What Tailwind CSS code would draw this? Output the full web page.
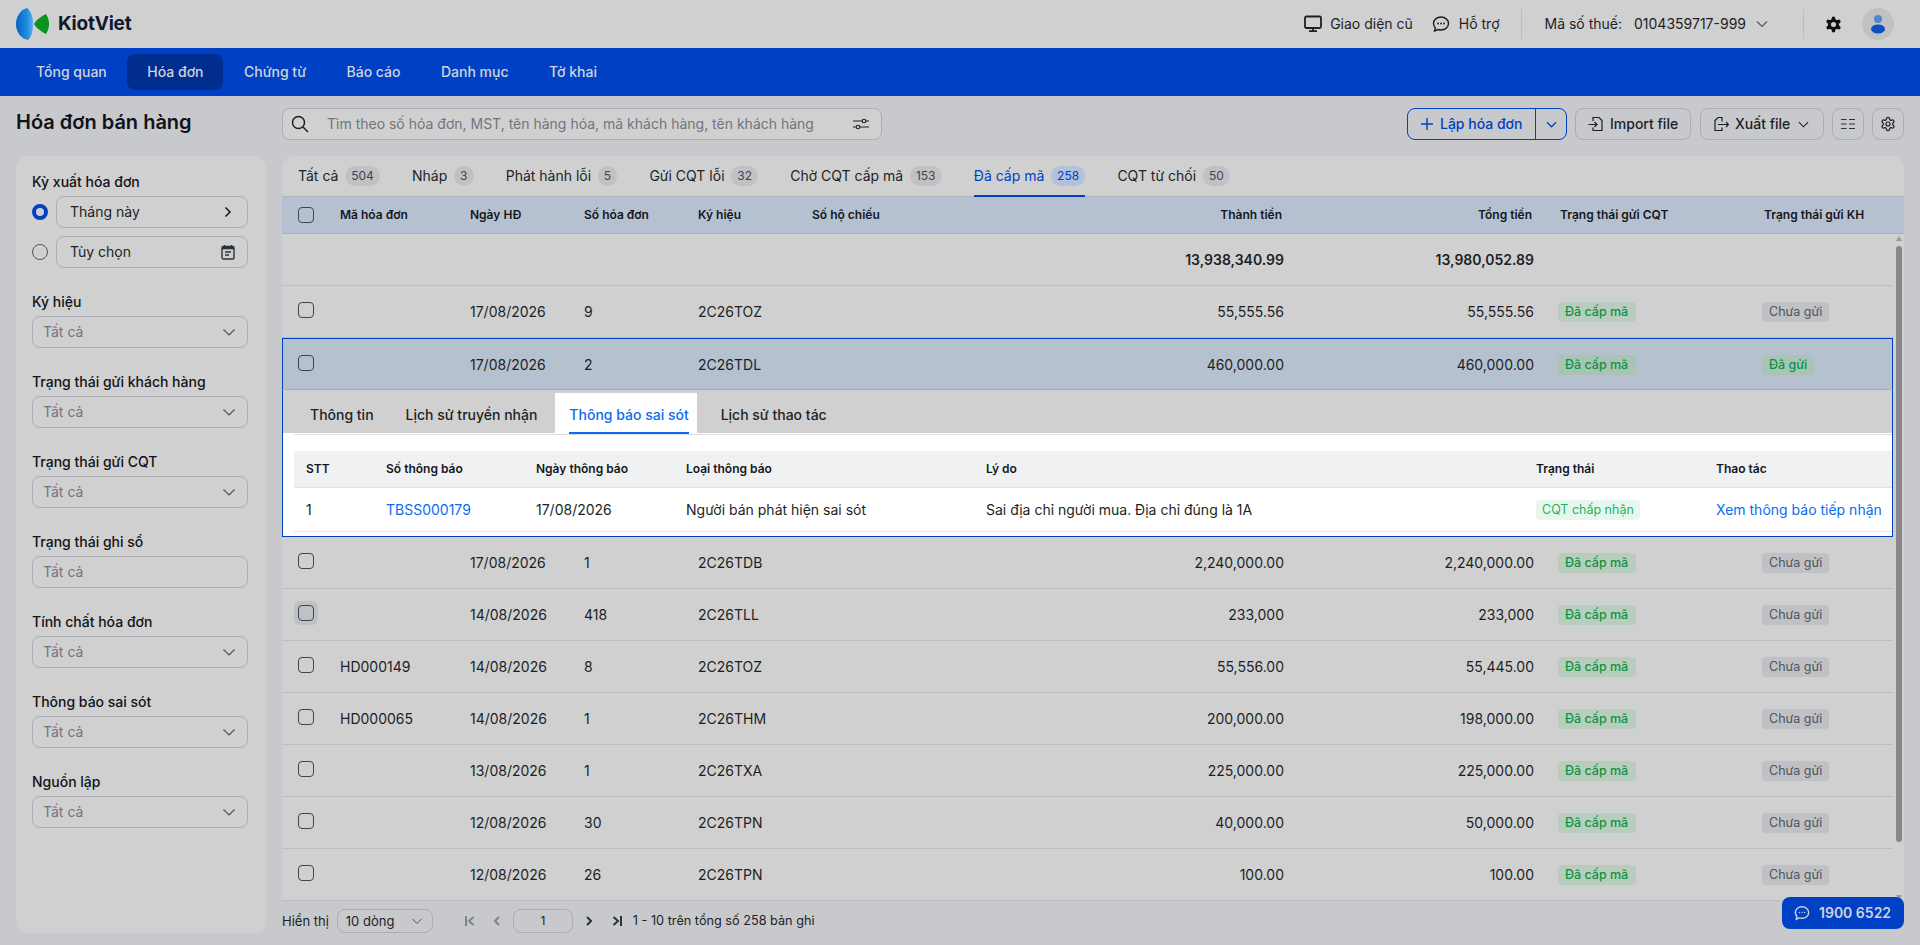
<!DOCTYPE html>
<html lang="vi">
<head>
    <meta charset="UTF-8">
    <meta name="viewport" content="width=device-width, initial-scale=1.0">
    <title>Hóa đơn bán hàng</title>
    <script src="https://cdn.jsdelivr.net/npm/@tailwindcss/browser@4"></script>
</head>
<body class="relative flex flex-col h-[945px] overflow-hidden bg-[#c8c9cc] text-sm text-[#1c1f26] font-[Inter,sans-serif]">

    <!-- header -->
    <header class="flex items-center h-12 pl-4 bg-[#d0d0d0]">
        <svg class="w-[34px] h-8" viewBox="0 0 34 32">
            <defs>
                <linearGradient id="logoBlue" x1="0" x2="1" y1="0" y2="0"><stop offset="0" stop-color="#0a5fc4"/><stop offset="0.6" stop-color="#1a8bdc"/><stop offset="1" stop-color="#5aa9e6"/></linearGradient>
            </defs>
            <path fill="url(#logoBlue)" d="M11 0C4 2 0 9 0 16c0 8 5 15 12 16 3-2 5-9 5-16S15 3 11 0z"/>
            <path fill="#0b931d" d="M18 16c2-4 8-8 12-10 2 3 3 7 3 10s-1 7-3 10c-4-2-10-6-12-10z"/>
        </svg>
        <span class="ml-2 text-[19px] font-bold tracking-[-0.2px] text-[#10182c]">KiotViet</span>

        <div class="flex items-center ml-auto">
            <svg class="w-[18px] h-[18px] text-[#1c1f26]" viewBox="0 0 18 18" fill="none" stroke="currentColor" stroke-width="1.8"><rect x="1" y="1.5" width="16" height="11.5" rx="1.5"/><path d="M9 13v3M5 16.2h8"/></svg>
            <span class="ml-2">Giao diện cũ</span>
            <svg class="ml-[19px] w-[18px] h-[18px] text-[#1c1f26]" viewBox="0 0 18 18" fill="none" stroke="currentColor" stroke-width="1.4"><path d="M9 2c4.2 0 7.500 2.800 7.500 6.500S13.200 15 9 15c-1 0-2-.2-2.900-.5L2.500 16l.8-3.200C2.200 11.700 1.500 10.200 1.500 8.500 1.500 4.800 4.800 2 9 2z"/><path stroke-width="1.8" stroke-linecap="round" d="M6 8.500h.01M9 8.500h.01M12 8.500h.01"/></svg>
            <span class="ml-[9px]">Hỗ trợ</span>
            <div class="ml-[21px] w-px h-[30px] bg-[#bbbcc0]"></div>
            <span class="ml-[23px]">Mã số thuế:</span>
            <span class="ml-3">0104359717-999</span>
            <svg class="ml-2.5 w-3 h-3 text-[#4b5563]" viewBox="0 0 12 12" fill="none" stroke="currentColor" stroke-width="1.1"><path d="M1 3.500l5 5 5-5"/></svg>
            <div class="ml-[35px] w-px h-[30px] bg-[#bbbcc0]"></div>
            <svg class="ml-[20px] w-[19px] h-[19px] text-[#111]" viewBox="0 0 24 24"><path fill="currentColor" d="M12.220 2h-.44a2 2 0 0 0-2 2v.18a2 2 0 0 1-1 1.730l-.43.25a2 2 0 0 1-2 0l-.15-.08a2 2 0 0 0-2.730.73l-.22.38a2 2 0 0 0 .73 2.730l.15.1a2 2 0 0 1 1 1.720v.51a2 2 0 0 1-1 1.740l-.15.09a2 2 0 0 0-.73 2.730l.22.38a2 2 0 0 0 2.730.73l.15-.08a2 2 0 0 1 2 0l.43.25a2 2 0 0 1 1 1.730V20a2 2 0 0 0 2 2h.44a2 2 0 0 0 2-2v-.18a2 2 0 0 1 1-1.730l.43-.25a2 2 0 0 1 2 0l.15.08a2 2 0 0 0 2.730-.73l.22-.39a2 2 0 0 0-.73-2.730l-.15-.08a2 2 0 0 1-1-1.740v-.5a2 2 0 0 1 1-1.740l.15-.09a2 2 0 0 0 .73-2.730l-.22-.38a2 2 0 0 0-2.730-.73l-.15.08a2 2 0 0 1-2 0l-.43-.25a2 2 0 0 1-1-1.730V4a2 2 0 0 0-2-2z"/><circle cx="12" cy="12" r="3.2" fill="#d0d0d0"/></svg>
            <div class="ml-[19px] mr-[26px] flex items-center justify-center w-8 h-8 rounded-full bg-[#c0c1c4]">
                <svg class="w-4 h-5" viewBox="0 0 16 20"><circle cx="8" cy="5" r="4" fill="#4f86d0"/><ellipse cx="8" cy="15" rx="7" ry="4.500" fill="#0a4fc0"/></svg>
            </div>
        </div>
    </header>

    <!-- nav -->
    <nav class="flex items-center h-12 pl-4 gap-[0.5px] bg-[#0040c4] font-medium text-[#d0d3dc]">
        <a class="px-5 leading-9" href="#">Tổng quan</a>
        <a class="px-5 leading-9 rounded-lg bg-[#002d8f]" href="#">Hóa đơn</a>
        <a class="px-5 leading-9" href="#">Chứng từ</a>
        <a class="px-5 leading-9" href="#">Báo cáo</a>
        <a class="px-5 leading-9" href="#">Danh mục</a>
        <a class="px-5 leading-9" href="#">Tờ khai</a>
    </nav>

    <div class="flex flex-1 px-4 min-h-0">
        <!-- left column -->
        <div class="w-[250px] mr-4 flex flex-col">
            <h1 class="h-[60px] pt-[13px] text-xl font-semibold leading-[26px] text-[#111318]">Hóa đơn bán hàng</h1>
            <aside class="h-[777px] pl-4 pr-[18px] pt-[15px] rounded-xl bg-[#d0d0d0]">
                <div class="font-medium leading-[22px] text-[#111318]">Kỳ xuất hóa đơn</div>
                <div class="flex items-center mt-[3px] gap-2">
                    <span class="w-4 h-4 rounded-full border-[4px] border-[#0040c4] bg-[#d0d0d0]"></span>
                    <div class="flex items-center justify-between w-[192px] h-8 pl-[13px] pr-[15px] rounded-lg border border-[#abadb3]">
                        <span>Tháng này</span>
                        <svg class="w-2 h-3" viewBox="0 0 8 12" fill="none" stroke="#1c1f26" stroke-width="1.6"><path d="M1.500 1.500L6 6l-4.500 4.500"/></svg>
                    </div>
                </div>
                <div class="flex items-center mt-2 gap-2">
                    <span class="w-4 h-4 rounded-full border border-[#4b5563]"></span>
                    <div class="flex items-center justify-between w-[192px] h-8 pl-[13px] pr-3 rounded-lg border border-[#abadb3]">
                        <span>Tùy chọn</span>
                        <svg class="w-[14px] h-4" viewBox="0 0 14 16" fill="none" stroke="#2a3140" stroke-width="1.4"><rect x="1" y="2.500" width="12" height="12.500" rx="1.500"/><path stroke-width="2.6" d="M1 4h12"/><path d="M3.500 1v2M10.500 1v2M4 8h6M4 11h4"/></svg>
                    </div>
                </div>

                <div class="mt-[23px] font-medium leading-[22px] text-[#111318]">Ký hiệu</div>
                <div class="flex items-center justify-between h-8 mt-[3px] pl-[10px] pr-3 rounded-lg border border-[#abadb3] text-[#70757e]"><span>Tất cả</span><svg class="w-3 h-3" viewBox="0 0 12 12" fill="none" stroke="#4b5563" stroke-width="1.2"><path d="M.5 3.500L6 9l5.500-5.500"/></svg></div>

                <div class="mt-[23px] font-medium leading-[22px] text-[#111318]">Trạng thái gửi khách hàng</div>
                <div class="flex items-center justify-between h-8 mt-[3px] pl-[10px] pr-3 rounded-lg border border-[#abadb3] text-[#70757e]"><span>Tất cả</span><svg class="w-3 h-3" viewBox="0 0 12 12" fill="none" stroke="#4b5563" stroke-width="1.2"><path d="M.5 3.500L6 9l5.500-5.500"/></svg></div>

                <div class="mt-[23px] font-medium leading-[22px] text-[#111318]">Trạng thái gửi CQT</div>
                <div class="flex items-center justify-between h-8 mt-[3px] pl-[10px] pr-3 rounded-lg border border-[#abadb3] text-[#70757e]"><span>Tất cả</span><svg class="w-3 h-3" viewBox="0 0 12 12" fill="none" stroke="#4b5563" stroke-width="1.2"><path d="M.5 3.500L6 9l5.500-5.500"/></svg></div>

                <div class="mt-[23px] font-medium leading-[22px] text-[#111318]">Trạng thái ghi sổ</div>
                <div class="flex items-center h-8 mt-[3px] pl-[10px] pr-3 rounded-lg border border-[#abadb3] text-[#70757e]"><span>Tất cả</span></div>

                <div class="mt-[23px] font-medium leading-[22px] text-[#111318]">Tính chất hóa đơn</div>
                <div class="flex items-center justify-between h-8 mt-[3px] pl-[10px] pr-3 rounded-lg border border-[#abadb3] text-[#70757e]"><span>Tất cả</span><svg class="w-3 h-3" viewBox="0 0 12 12" fill="none" stroke="#4b5563" stroke-width="1.2"><path d="M.5 3.500L6 9l5.500-5.500"/></svg></div>

                <div class="mt-[23px] font-medium leading-[22px] text-[#111318]">Thông báo sai sót</div>
                <div class="flex items-center justify-between h-8 mt-[3px] pl-[10px] pr-3 rounded-lg border border-[#abadb3] text-[#70757e]"><span>Tất cả</span><svg class="w-3 h-3" viewBox="0 0 12 12" fill="none" stroke="#4b5563" stroke-width="1.2"><path d="M.5 3.500L6 9l5.500-5.500"/></svg></div>

                <div class="mt-[23px] font-medium leading-[22px] text-[#111318]">Nguồn lập</div>
                <div class="flex items-center justify-between h-8 mt-[3px] pl-[10px] pr-3 rounded-lg border border-[#abadb3] text-[#70757e]"><span>Tất cả</span><svg class="w-3 h-3" viewBox="0 0 12 12" fill="none" stroke="#4b5563" stroke-width="1.2"><path d="M.5 3.500L6 9l5.500-5.500"/></svg></div>
            </aside>
        </div>

        <!-- main column -->
        <div class="flex-1 flex flex-col min-w-0">
            <!-- toolbar -->
            <div class="flex items-center h-8 mt-3 mb-4">
                <div class="flex items-center w-[600px] h-8 pl-2 pr-3 rounded-lg border border-[#abadb3] bg-[#d0d0d0]">
                    <svg class="w-[18px] h-[18px]" viewBox="0 0 18 18" fill="none" stroke="#1c1f26" stroke-width="1.5"><circle cx="7.500" cy="7.500" r="6"/><path d="M12 12l5 5"/></svg>
                    <span class="ml-[18px] text-[#70757e]">Tìm theo số hóa đơn, MST, tên hàng hóa, mã khách hàng, tên khách hàng</span>
                    <svg class="ml-auto w-4 h-3" viewBox="0 0 16 12" fill="none" stroke="#1c1f26" stroke-width="1.1"><path d="M0 3h16M0 9h16"/><circle cx="11" cy="3" r="1.800" fill="#d0d0d0"/><circle cx="5" cy="9" r="1.800" fill="#d0d0d0"/></svg>
                </div>

                <div class="flex items-center h-8 ml-auto rounded-lg border border-[#0040c4] text-[#0040c4] font-medium">
                    <div class="flex items-center h-full w-[128px] pl-[13px] border-r border-[#0040c4]">
                        <svg class="w-3 h-3" viewBox="0 0 12 12" fill="none" stroke="currentColor" stroke-width="1.4"><path d="M6 0v12M0 6h12"/></svg>
                        <span class="ml-[7px]">Lập hóa đơn</span>
                    </div>
                    <div class="flex items-center justify-center w-[30px]"><svg class="w-[11px] h-[11px]" viewBox="0 0 12 12" fill="none" stroke="currentColor" stroke-width="1.3"><path d="M1 3.500l5 5 5-5"/></svg></div>
                </div>
                <div class="flex items-center h-8 w-[116px] ml-2 pl-3 rounded-lg border border-[#abadb3] font-medium">
                    <svg class="w-4 h-4" viewBox="0 0 16 16" fill="none" stroke="#1c1f26" stroke-width="1.2"><path d="M5 5V1.500h6l3 3V14.500H5V11.500"/><path d="M.5 8.500H9M6.500 6l2.500 2.500L6.500 11"/></svg>
                    <span class="ml-[6px]">Import file</span>
                </div>
                <div class="flex items-center h-8 w-[124px] ml-[9px] pl-3 rounded-lg border border-[#abadb3] font-medium">
                    <svg class="w-4 h-4" viewBox="0 0 16 16" fill="none" stroke="#1c1f26" stroke-width="1.2"><path d="M9 5.500V1.500H5l-3 3v10h7V11.500"/><path d="M5 8.500h10.500M13 6l2.500 2.500L13 11"/></svg>
                    <span class="ml-[6px]">Xuất file</span>
                    <svg class="ml-2 w-[11px] h-[11px]" viewBox="0 0 12 12" fill="none" stroke="#1c1f26" stroke-width="1.2"><path d="M1 3.500l5 5 5-5"/></svg>
                </div>
                <div class="flex items-center justify-center w-8 h-8 ml-2 rounded-lg border border-[#abadb3]">
                    <svg class="w-[14px] h-3" viewBox="0 0 14 12" fill="none" stroke="#2a3140" stroke-width="1"><path d="M0 1.500h5.500M8 1.500h6M0 6h5.500M8 6h6M0 10.500h5.500M8 10.500h6"/></svg>
                </div>
                <div class="flex items-center justify-center w-8 h-8 ml-2 rounded-lg border border-[#abadb3]">
                    <svg class="w-4 h-4" viewBox="0 0 24 24" fill="none" stroke="#1c1f26" stroke-width="1.8"><path d="M12.220 2h-.44a2 2 0 0 0-2 2v.18a2 2 0 0 1-1 1.730l-.43.25a2 2 0 0 1-2 0l-.15-.08a2 2 0 0 0-2.730.73l-.22.38a2 2 0 0 0 .73 2.730l.15.1a2 2 0 0 1 1 1.720v.51a2 2 0 0 1-1 1.740l-.15.09a2 2 0 0 0-.73 2.730l.22.38a2 2 0 0 0 2.730.73l.15-.08a2 2 0 0 1 2 0l.43.25a2 2 0 0 1 1 1.730V20a2 2 0 0 0 2 2h.44a2 2 0 0 0 2-2v-.18a2 2 0 0 1 1-1.730l.43-.25a2 2 0 0 1 2 0l.15.08a2 2 0 0 0 2.730-.73l.22-.39a2 2 0 0 0-.73-2.730l-.15-.08a2 2 0 0 1-1-1.740v-.5a2 2 0 0 1 1-1.740l.15-.09a2 2 0 0 0 .73-2.730l-.22-.38a2 2 0 0 0-2.730-.73l-.15.08a2 2 0 0 1-2 0l-.43-.25a2 2 0 0 1-1-1.730V4a2 2 0 0 0-2-2z"/><circle cx="12" cy="12" r="3"/></svg>
                </div>
            </div>

            <!-- table panel -->
            <div class="relative rounded-t-xl bg-[#d0d0d0]">
                <div class="flex items-center h-[41px] pl-4 gap-8 border-b border-[#b4b5ba]">
                    <div class="flex items-center gap-[6.5px]"><span>Tất cả</span><span class="px-[6.25px] rounded-full bg-[#c0c1c4] text-xs leading-5 text-[#3f4652]">504</span></div>
                    <div class="flex items-center gap-[6.5px]"><span>Nháp</span><span class="px-[6.25px] rounded-full bg-[#c0c1c4] text-xs leading-5 text-[#3f4652]">3</span></div>
                    <div class="flex items-center gap-[6.5px]"><span>Phát hành lỗi</span><span class="px-[6.25px] rounded-full bg-[#c0c1c4] text-xs leading-5 text-[#3f4652]">5</span></div>
                    <div class="flex items-center gap-[6.5px]"><span>Gửi CQT lỗi</span><span class="px-[6.25px] rounded-full bg-[#c0c1c4] text-xs leading-5 text-[#3f4652]">32</span></div>
                    <div class="flex items-center gap-[6.5px]"><span>Chờ CQT cấp mã</span><span class="px-[6.25px] rounded-full bg-[#c0c1c4] text-xs leading-5 text-[#3f4652]">153</span></div>
                    <div class="relative flex items-center h-full gap-[6.5px] text-[#0040c4]"><span>Đã cấp mã</span><span class="px-[6.25px] rounded-full bg-[#b2c2da] text-xs leading-5">258</span><span class="absolute left-0 right-0 -bottom-px h-[2px] bg-[#0040c4]"></span></div>
                    <div class="flex items-center gap-[6.5px]"><span>CQT từ chối</span><span class="px-[6.25px] rounded-full bg-[#c0c1c4] text-xs leading-5 text-[#3f4652]">50</span></div>
                </div>

                <table class="w-full table-fixed border-separate border-spacing-0">
                    <colgroup>
                        <col class="w-[58px]"><col class="w-[130px]"><col class="w-[114px]"><col class="w-[114px]"><col class="w-[114px]"><col class="w-[221px]"><col class="w-[251px]"><col class="w-[250px]"><col class="w-[228px]"><col class="w-[131px]"><col class="w-[11px]">
                    </colgroup>
                    <thead class="bg-[#b5c1d0] text-xs font-semibold text-left text-[#14171d]">
                        <tr class="h-[37px]">
                            <th class="pl-4 font-semibold border-b border-[#9fb2d2]"><span class="block w-4 h-4 rounded border-[1.5px] border-[#3c4656]"></span></th>
                            <th class="font-semibold border-b border-[#9fb2d2]">Mã hóa đơn</th>
                            <th class="font-semibold border-b border-[#9fb2d2]">Ngày HĐ</th>
                            <th class="font-semibold border-b border-[#9fb2d2]">Số hóa đơn</th>
                            <th class="font-semibold border-b border-[#9fb2d2]">Ký hiệu</th>
                            <th class="font-semibold border-b border-[#9fb2d2]">Số hộ chiếu</th>
                            <th class="pr-[2px] font-semibold text-right border-b border-[#9fb2d2]">Thành tiền</th>
                            <th class="pr-[2px] font-semibold text-right border-b border-[#9fb2d2]">Tổng tiền</th>
                            <th class="pl-[26px] font-semibold border-b border-[#9fb2d2]">Trạng thái gửi CQT</th>
                            <th class="pl-[2px] font-semibold whitespace-nowrap border-b border-[#9fb2d2]">Trạng thái gửi KH</th>
                            <th class="border-b border-[#9fb2d2]"></th>
                        </tr>
                    </thead>
                    <tbody>
                        <tr class="h-[52px] font-semibold">
                            <td colspan="6" class="border-b border-[#bcbdc3]"></td>
                            <td class="text-right border-b border-[#bcbdc3]">13,938,340.99</td>
                            <td class="text-right border-b border-[#bcbdc3]">13,980,052.89</td>
                            <td colspan="2" class="border-b border-[#bcbdc3]"></td>
                            <td></td>
                        </tr>
                        <tr class="h-[52px]">
                            <td class="pl-4 border-b border-[#bcbdc3]"><span class="block w-4 h-4 -mt-1 rounded border-[1.5px] border-[#3c4656]"></span></td>
                            <td class="border-b border-[#bcbdc3]"></td>
                            <td class="border-b border-[#bcbdc3]">17/08/2026</td>
                            <td class="border-b border-[#bcbdc3]">9</td>
                            <td class="border-b border-[#bcbdc3]">2C26TOZ</td>
                            <td class="border-b border-[#bcbdc3]"></td>
                            <td class="text-right border-b border-[#bcbdc3]">55,555.56</td>
                            <td class="text-right border-b border-[#bcbdc3]">55,555.56</td>
                            <td class="pl-6 border-b border-[#bcbdc3]"><span class="inline-block pl-[7px] pr-2 rounded bg-[#b9cdbf] text-[12.5px] font-medium leading-5 text-[#0a9440]">Đã cấp mã</span></td>
                            <td class="border-b border-[#bcbdc3]"><span class="inline-block px-[7px] rounded bg-[#c0c1c4] text-[12.5px] leading-5 text-[#4b5563]">Chưa gửi</span></td>
                            <td></td>
                        </tr>

                        <!-- selected row -->
                        <tr class="h-[52px] bg-[#b5c1ce]">
                            <td class="pl-[15px] pt-px border-y border-l border-t-[#0040c4] border-l-[#0040c4] border-b-[#a7acb4]"><span class="block w-4 h-4 -mt-1 rounded border-[1.5px] border-[#3c4656]"></span></td>
                            <td class="pt-px border-y border-t-[#0040c4] border-b-[#a7acb4]"></td>
                            <td class="pt-px border-y border-t-[#0040c4] border-b-[#a7acb4]">17/08/2026</td>
                            <td class="pt-px border-y border-t-[#0040c4] border-b-[#a7acb4]">2</td>
                            <td class="pt-px border-y border-t-[#0040c4] border-b-[#a7acb4]">2C26TDL</td>
                            <td class="pt-px border-y border-t-[#0040c4] border-b-[#a7acb4]"></td>
                            <td class="pt-px text-right border-y border-t-[#0040c4] border-b-[#a7acb4]">460,000.00</td>
                            <td class="pt-px text-right border-y border-t-[#0040c4] border-b-[#a7acb4]">460,000.00</td>
                            <td class="pl-6 border-y border-t-[#0040c4] border-b-[#a7acb4]"><span class="inline-block pl-[7px] pr-2 rounded bg-[#a9c4b6] text-[12.5px] font-medium leading-5 text-[#0a9440]">Đã cấp mã</span></td>
                            <td class="border-y border-r border-t-[#0040c4] border-r-[#0040c4] border-b-[#a7acb4]"><span class="inline-block px-[7px] rounded bg-[#a9c4b6] text-[12.5px] font-medium leading-5 text-[#0a9440]">Đã gửi</span></td>
                            <td class="bg-[#d0d0d0]"></td>
                        </tr>

                        <!-- expanded detail -->
                        <tr>
                            <td colspan="10" class="h-[147px] p-0 border-x border-b border-[#0040c4]">
                                <div class="flex items-end h-[43px] pl-[27px] gap-8 font-medium bg-[#d0d0d0]">
                                    <span class="leading-9">Thông tin</span>
                                    <span class="leading-9">Lịch sử truyền nhận</span>
                                    <span class="relative z-10 -ml-[14px] -mr-2 -mb-px pl-[14px] pr-2 h-[41px] bg-white"><span class="block h-[41px] leading-[44px] text-[#0a6cf0] border-b-2 border-[#0a6cf0]">Thông báo sai sót</span></span>
                                    <span class="leading-9">Lịch sử thao tác</span>
                                </div>
                                <div class="h-[103px] pt-px pl-[11px] bg-white">
                                    <div class="h-px mb-4 bg-[#dcdde0]"></div>
                                    <table class="w-full table-fixed border-separate border-spacing-0">
                                        <colgroup>
                                            <col class="w-[92px]"><col class="w-[150px]"><col class="w-[150px]"><col class="w-[300px]"><col class="w-[550px]"><col class="w-[180px]"><col>
                                        </colgroup>
                                        <thead class="bg-[#f0f1f3] text-xs text-left text-[#14171d]">
                                            <tr class="h-[37px]">
                                                <th class="pl-3 font-semibold border-b border-[#e2e3e6]">STT</th>
                                                <th class="font-semibold border-b border-[#e2e3e6]">Số thông báo</th>
                                                <th class="font-semibold border-b border-[#e2e3e6]">Ngày thông báo</th>
                                                <th class="font-semibold border-b border-[#e2e3e6]">Loại thông báo</th>
                                                <th class="font-semibold border-b border-[#e2e3e6]">Lý do</th>
                                                <th class="font-semibold border-b border-[#e2e3e6]">Trạng thái</th>
                                                <th class="font-semibold border-b border-[#e2e3e6]">Thao tác</th>
                                            </tr>
                                        </thead>
                                        <tbody>
                                            <tr class="h-11">
                                                <td class="pl-3 border-b border-[#e5e7eb]">1</td>
                                                <td class="border-b border-[#e5e7eb] text-[#0a6cf0]">TBSS000179</td>
                                                <td class="border-b border-[#e5e7eb]">17/08/2026</td>
                                                <td class="border-b border-[#e5e7eb]">Người bán phát hiện sai sót</td>
                                                <td class="border-b border-[#e5e7eb]">Sai địa chỉ người mua. Địa chỉ đúng là 1A</td>
                                                <td class="border-b border-[#e5e7eb]"><span class="inline-block px-[6px] rounded bg-[#e8f7ee] text-[12.5px] leading-5 text-[#22b35e]">CQT chấp nhận</span></td>
                                                <td class="border-b border-[#e5e7eb] text-[#0a6cf0] whitespace-nowrap">Xem thông báo tiếp nhận</td>
                                            </tr>
                                        </tbody>
                                    </table>
                                </div>
                            </td>
                            <td></td>
                        </tr>

                        <tr class="h-[52px]">
                            <td class="pl-4 border-b border-[#bcbdc3]"><span class="block w-4 h-4 -mt-1 rounded border-[1.5px] border-[#3c4656]"></span></td>
                            <td class="border-b border-[#bcbdc3]"></td>
                            <td class="border-b border-[#bcbdc3]">17/08/2026</td>
                            <td class="border-b border-[#bcbdc3]">1</td>
                            <td class="border-b border-[#bcbdc3]">2C26TDB</td>
                            <td class="border-b border-[#bcbdc3]"></td>
                            <td class="text-right border-b border-[#bcbdc3]">2,240,000.00</td>
                            <td class="text-right border-b border-[#bcbdc3]">2,240,000.00</td>
                            <td class="pl-6 border-b border-[#bcbdc3]"><span class="inline-block pl-[7px] pr-2 rounded bg-[#b9cdbf] text-[12.5px] font-medium leading-5 text-[#0a9440]">Đã cấp mã</span></td>
                            <td class="border-b border-[#bcbdc3]"><span class="inline-block px-[7px] rounded bg-[#c0c1c4] text-[12.5px] leading-5 text-[#4b5563]">Chưa gửi</span></td>
                            <td></td>
                        </tr>
                        <tr class="h-[52px]">
                            <td class="pl-3 border-b border-[#bcbdc3]"><span class="flex items-center justify-center w-6 h-6 -mt-1 rounded-md bg-[#c0c1c4]"><span class="block w-4 h-4 rounded border-[1.5px] border-[#3c4656]"></span></span></td>
                            <td class="border-b border-[#bcbdc3]"></td>
                            <td class="border-b border-[#bcbdc3]">14/08/2026</td>
                            <td class="border-b border-[#bcbdc3]">418</td>
                            <td class="border-b border-[#bcbdc3]">2C26TLL</td>
                            <td class="border-b border-[#bcbdc3]"></td>
                            <td class="text-right border-b border-[#bcbdc3]">233,000</td>
                            <td class="text-right border-b border-[#bcbdc3]">233,000</td>
                            <td class="pl-6 border-b border-[#bcbdc3]"><span class="inline-block pl-[7px] pr-2 rounded bg-[#b9cdbf] text-[12.5px] font-medium leading-5 text-[#0a9440]">Đã cấp mã</span></td>
                            <td class="border-b border-[#bcbdc3]"><span class="inline-block px-[7px] rounded bg-[#c0c1c4] text-[12.5px] leading-5 text-[#4b5563]">Chưa gửi</span></td>
                            <td></td>
                        </tr>
                        <tr class="h-[52px]">
                            <td class="pl-4 border-b border-[#bcbdc3]"><span class="block w-4 h-4 -mt-1 rounded border-[1.5px] border-[#3c4656]"></span></td>
                            <td class="border-b border-[#bcbdc3]">HD000149</td>
                            <td class="border-b border-[#bcbdc3]">14/08/2026</td>
                            <td class="border-b border-[#bcbdc3]">8</td>
                            <td class="border-b border-[#bcbdc3]">2C26TOZ</td>
                            <td class="border-b border-[#bcbdc3]"></td>
                            <td class="text-right border-b border-[#bcbdc3]">55,556.00</td>
                            <td class="text-right border-b border-[#bcbdc3]">55,445.00</td>
                            <td class="pl-6 border-b border-[#bcbdc3]"><span class="inline-block pl-[7px] pr-2 rounded bg-[#b9cdbf] text-[12.5px] font-medium leading-5 text-[#0a9440]">Đã cấp mã</span></td>
                            <td class="border-b border-[#bcbdc3]"><span class="inline-block px-[7px] rounded bg-[#c0c1c4] text-[12.5px] leading-5 text-[#4b5563]">Chưa gửi</span></td>
                            <td></td>
                        </tr>
                        <tr class="h-[52px]">
                            <td class="pl-4 border-b border-[#bcbdc3]"><span class="block w-4 h-4 -mt-1 rounded border-[1.5px] border-[#3c4656]"></span></td>
                            <td class="border-b border-[#bcbdc3]">HD000065</td>
                            <td class="border-b border-[#bcbdc3]">14/08/2026</td>
                            <td class="border-b border-[#bcbdc3]">1</td>
                            <td class="border-b border-[#bcbdc3]">2C26THM</td>
                            <td class="border-b border-[#bcbdc3]"></td>
                            <td class="text-right border-b border-[#bcbdc3]">200,000.00</td>
                            <td class="text-right border-b border-[#bcbdc3]">198,000.00</td>
                            <td class="pl-6 border-b border-[#bcbdc3]"><span class="inline-block pl-[7px] pr-2 rounded bg-[#b9cdbf] text-[12.5px] font-medium leading-5 text-[#0a9440]">Đã cấp mã</span></td>
                            <td class="border-b border-[#bcbdc3]"><span class="inline-block px-[7px] rounded bg-[#c0c1c4] text-[12.5px] leading-5 text-[#4b5563]">Chưa gửi</span></td>
                            <td></td>
                        </tr>
                        <tr class="h-[52px]">
                            <td class="pl-4 border-b border-[#bcbdc3]"><span class="block w-4 h-4 -mt-1 rounded border-[1.5px] border-[#3c4656]"></span></td>
                            <td class="border-b border-[#bcbdc3]"></td>
                            <td class="border-b border-[#bcbdc3]">13/08/2026</td>
                            <td class="border-b border-[#bcbdc3]">1</td>
                            <td class="border-b border-[#bcbdc3]">2C26TXA</td>
                            <td class="border-b border-[#bcbdc3]"></td>
                            <td class="text-right border-b border-[#bcbdc3]">225,000.00</td>
                            <td class="text-right border-b border-[#bcbdc3]">225,000.00</td>
                            <td class="pl-6 border-b border-[#bcbdc3]"><span class="inline-block pl-[7px] pr-2 rounded bg-[#b9cdbf] text-[12.5px] font-medium leading-5 text-[#0a9440]">Đã cấp mã</span></td>
                            <td class="border-b border-[#bcbdc3]"><span class="inline-block px-[7px] rounded bg-[#c0c1c4] text-[12.5px] leading-5 text-[#4b5563]">Chưa gửi</span></td>
                            <td></td>
                        </tr>
                        <tr class="h-[52px]">
                            <td class="pl-4 border-b border-[#bcbdc3]"><span class="block w-4 h-4 -mt-1 rounded border-[1.5px] border-[#3c4656]"></span></td>
                            <td class="border-b border-[#bcbdc3]"></td>
                            <td class="border-b border-[#bcbdc3]">12/08/2026</td>
                            <td class="border-b border-[#bcbdc3]">30</td>
                            <td class="border-b border-[#bcbdc3]">2C26TPN</td>
                            <td class="border-b border-[#bcbdc3]"></td>
                            <td class="text-right border-b border-[#bcbdc3]">40,000.00</td>
                            <td class="text-right border-b border-[#bcbdc3]">50,000.00</td>
                            <td class="pl-6 border-b border-[#bcbdc3]"><span class="inline-block pl-[7px] pr-2 rounded bg-[#b9cdbf] text-[12.5px] font-medium leading-5 text-[#0a9440]">Đã cấp mã</span></td>
                            <td class="border-b border-[#bcbdc3]"><span class="inline-block px-[7px] rounded bg-[#c0c1c4] text-[12.5px] leading-5 text-[#4b5563]">Chưa gửi</span></td>
                            <td></td>
                        </tr>
                        <tr class="h-[52px]">
                            <td class="pl-4 border-b border-[#bcbdc3]"><span class="block w-4 h-4 -mt-1 rounded border-[1.5px] border-[#3c4656]"></span></td>
                            <td class="border-b border-[#bcbdc3]"></td>
                            <td class="border-b border-[#bcbdc3]">12/08/2026</td>
                            <td class="border-b border-[#bcbdc3]">26</td>
                            <td class="border-b border-[#bcbdc3]">2C26TPN</td>
                            <td class="border-b border-[#bcbdc3]"></td>
                            <td class="text-right border-b border-[#bcbdc3]">100.00</td>
                            <td class="text-right border-b border-[#bcbdc3]">100.00</td>
                            <td class="pl-6 border-b border-[#bcbdc3]"><span class="inline-block pl-[7px] pr-2 rounded bg-[#b9cdbf] text-[12.5px] font-medium leading-5 text-[#0a9440]">Đã cấp mã</span></td>
                            <td class="border-b border-[#bcbdc3]"><span class="inline-block px-[7px] rounded bg-[#c0c1c4] text-[12.5px] leading-5 text-[#4b5563]">Chưa gửi</span></td>
                            <td></td>
                        </tr>
                    </tbody>
                </table>

                <!-- scrollbar -->
                <div class="absolute top-[80px] bottom-0 right-[2px] w-[6px] flex flex-col items-center">
                    <span class="w-0 h-0 border-x-[3px] border-b-[5px] border-x-transparent border-b-[#9a9a9e]"></span>
                    <span class="w-[6px] h-[596px] mt-[5px] rounded-full bg-[#86868a]"></span>
                    <span class="mt-auto mb-[1px] w-0 h-0 border-x-[3px] border-t-[5px] border-x-transparent border-t-[#9a9a9e]"></span>
                </div>
            </div>

            <!-- pagination -->
            <div class="flex items-center h-6 mt-2 text-[13px]">
                <span>Hiển thị</span>
                <div class="flex items-center justify-between w-[96px] h-6 ml-2 pl-2 pr-[10px] rounded-lg border border-[#abadb3]"><span>10 dòng</span><svg class="w-[10px] h-[10px]" viewBox="0 0 12 12" fill="none" stroke="#4b5563" stroke-width="1.2"><path d="M.5 3.500L6 9l5.500-5.500"/></svg></div>
                <svg class="ml-[32px] w-[10px] h-[10px] text-[#80838a]" viewBox="0 0 10 10" fill="none" stroke="currentColor" stroke-width="2"><path d="M1 0v10M8.500 1L4 5l4.500 4"/></svg>
                <svg class="ml-[19px] w-[6px] h-[10px] text-[#80838a]" viewBox="0 0 6 10" fill="none" stroke="currentColor" stroke-width="2"><path d="M5 1L1 5l4 4"/></svg>
                <div class="flex items-center justify-center w-[60px] h-6 ml-[13px] rounded-lg border border-[#abadb3] text-xs">1</div>
                <svg class="ml-[13px] w-[6px] h-[10px] text-[#2a3140]" viewBox="0 0 6 10" fill="none" stroke="currentColor" stroke-width="2"><path d="M1 1l4 4-4 4"/></svg>
                <svg class="ml-[20px] w-[10px] h-[10px] text-[#2a3140]" viewBox="0 0 10 10" fill="none" stroke="currentColor" stroke-width="2"><path d="M9 0v10M1.500 1L6 5 1.500 9"/></svg>
                <span class="ml-[11px] text-[12.7px]">1 - 10 trên tổng số 258 bản ghi</span>
            </div>
        </div>
    </div>

    <!-- hotline -->
    <div class="absolute right-4 bottom-4 flex items-center w-[122px] h-8 pl-3 rounded-lg bg-[#0040c4] text-[#d0d3dc] font-semibold">
        <svg class="w-4 h-4" viewBox="0 0 18 18" fill="none" stroke="currentColor" stroke-width="1.6"><path d="M9 2c4.200 0 7.500 2.800 7.500 6.500S13.200 15 9 15c-1 0-2-.2-2.900-.5L2.500 16l.8-3.200C2.200 11.700 1.500 10.200 1.500 8.500 1.500 4.800 4.800 2 9 2z"/><path stroke-linecap="round" d="M6 8.500h.01M9 8.500h.01M12 8.500h.01"/></svg>
        <span class="ml-[9px]">1900 6522</span>
    </div>
</body>
</html>
